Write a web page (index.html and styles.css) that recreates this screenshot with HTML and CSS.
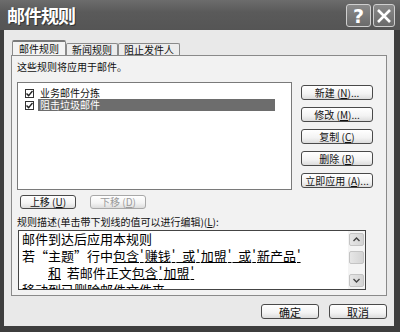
FILE: index.html
```html
<!doctype html>
<html lang="zh-CN">
<head>
  <meta charset="utf-8" />
  <title>邮件规则</title>
  <link rel="stylesheet" href="styles.css">
</head>
<body>
  <div class="window">
    <div class="titlebar">
      <span class="title">邮件规则</span>
      <div class="caps">
        <span class="cap">?</span>
        <span class="cap cap-x">
          <svg width="16" height="16" viewBox="0 0 16 16"><path d="M2 2 L14 14 M14 2 L2 14" stroke="#fff" stroke-width="2.6"/></svg>
        </span>
      </div>
    </div>

    <div class="client">
      <div class="tabs">
        <span class="tab on">邮件规则</span>
        <span class="tab">新闻规则</span>
        <span class="tab">阻止发件人</span>
      </div>

      <div class="panel">
        <div class="hint">这些规则将应用于邮件。</div>

        <div class="rules">
          <div class="list">
            <div class="item"><span class="chk"><svg width="7" height="7" viewBox="0 0 7 7"><path d="M0.5 3.5 L2.6 5.6 L6.5 1" fill="none" stroke="#222" stroke-width="1.4"/></svg></span><span class="name">业务邮件分拣</span></div>
            <div class="item sel"><span class="chk"><svg width="7" height="7" viewBox="0 0 7 7"><path d="M0.5 3.5 L2.6 5.6 L6.5 1" fill="none" stroke="#222" stroke-width="1.4"/></svg></span><span class="name">阻击垃圾邮件</span></div>
          </div>
          <div class="side">
            <button class="btn">新建 (<u>N</u>)...</button>
            <button class="btn">修改 (<u>M</u>)...</button>
            <button class="btn">复制 (<u>C</u>)</button>
            <button class="btn">删除 (<u>R</u>)</button>
            <button class="btn">立即应用 (<u>A</u>)...</button>
          </div>
        </div>

        <div class="moves">
          <button class="btn small">上移 (<u>U</u>)</button>
          <button class="btn small off">下移 (<u>D</u>)</button>
        </div>

        <div class="label">规则描述(单击带下划线的值可以进行编辑)(<u>L</u>):</div>

        <div class="desc">
          <div class="desc-text">
            <div>邮件到达后应用本规则</div>
            <div>若“主题”行中<u>包含<span class="q">'</span>赚钱<span class="q">'</span>&nbsp; 或<span class="q">'</span>加盟<span class="q">'</span>&nbsp; 或<span class="q">'</span>新产品<span class="q">'</span></u></div>
            <div class="indent"><u>和</u>&nbsp; 若邮件正文<u>包含<span class="q">'</span>加盟<span class="q">'</span></u></div>
            <div>移动到已删除邮件文件夹</div>
          </div>
          <div class="scroll">
            <span class="arrow"><svg width="7" height="5" viewBox="0 0 7 5"><path d="M0.5 4 L3.5 1 L6.5 4" fill="none" stroke="#444" stroke-width="1.4"/></svg></span>
            <span class="thumb"></span>
            <span class="track"></span>
            <span class="arrow"><svg width="7" height="5" viewBox="0 0 7 5"><path d="M0.5 1 L3.5 4 L6.5 1" fill="none" stroke="#444" stroke-width="1.4"/></svg></span>
          </div>
        </div>
      </div>

      <div class="footer">
        <button class="btn wide">确定</button>
        <button class="btn wide">取消</button>
      </div>
    </div>
  </div>
</body>
</html>
```

FILE: styles.css
```css
* { box-sizing: border-box; }
html, body {
  margin: 0; width: 400px; height: 332px; overflow: hidden;
  font-family: "Noto Sans CJK SC", "Noto Sans", sans-serif;
  background: #3e3e3e;
}
.window { display: flex; flex-direction: column; height: 332px; }

.titlebar {
  height: 30px; flex: none;
  display: flex; align-items: center; justify-content: space-between;
  padding: 0 5px 0 7px;
  background: linear-gradient(180deg, #6c6c6c 0%, #5a5a5a 40%, #555 100%);
}
.title {
  color: #fff; font-size: 18px; font-weight: bold; letter-spacing: -1px;
  text-shadow: 1px 1px 0 #333;
}
.caps { display: flex; gap: 2px; padding-top: 1px; }
.cap {
  width: 25px; height: 23px;
  display: flex; align-items: center; justify-content: center;
  border: 1px solid #cfcfcf; border-radius: 3px;
  background: linear-gradient(180deg, #8a8a8a, #6a6a6a);
  color: #fff; font-family: "DejaVu Sans", sans-serif; font-weight: bold; font-size: 19px;
}
.cap-x { width: 22px; }

.client {
  flex: 1; display: flex; flex-direction: column;
  margin: 0 6px 6px 4px;
  padding: 10px 7px 0 7px;
  background: #e9e9e9;
  font-size: 10px; color: #111;
}

.tabs { display: flex; align-items: flex-end; padding-left: 1px; height: 15px; }
.tab {
  height: 12px; line-height: 11px;
  padding: 0 5px;
  border: 1px solid #8a8a8a; border-bottom: none; border-radius: 2px 2px 0 0;
  background: #ececec; white-space: nowrap;
}
.tab.on {
  height: 15px; line-height: 14px; padding: 0 6px;
  background: #f3f3f3; border-top: 2px solid #7a7a7a;
}

.panel {
  height: 241px; flex: none;
  border: 1px solid #8a8a8a;
  background: #f2f2f2;
  padding: 5px 6px 0 5px;
  display: flex; flex-direction: column;
}
.hint { line-height: 12px; }

.rules { display: flex; gap: 9px; margin-top: 9px; }
.list {
  width: 275px; height: 108px;
  background: #fff; border: 1px solid #7a7a7a;
  padding: 4px 0 0 7px;
  display: flex; flex-direction: column;
}
.item { display: flex; align-items: center; height: 12px; gap: 4px; }
.chk {
  width: 9px; height: 9px; flex: none;
  border: 1px solid #333; background: #fff;
  display: flex; align-items: center; justify-content: center;
}
.name { line-height: 12px; height: 12px; padding: 0 2px; }
.item.sel .name { background: #6d6d6d; color: #fff; width: 237px; }

.side { display: flex; flex-direction: column; gap: 7px; padding-top: 3px; }
.btn {
  width: 72px; height: 15px; padding: 0;
  font: inherit; font-size: 10px; line-height: 12px; color: #111;
  border: 1px solid #4a4a4a; border-radius: 3px;
  background: linear-gradient(180deg, #fff 0%, #f3f3f3 60%, #dcdcdc 100%);
}
.btn u { text-decoration: underline; }

.moves { display: flex; gap: 14px; margin-top: 5px; padding-left: 3px; }
.btn.small { width: 56px; height: 14px; }
.btn.off { color: #9a9a9a; border-color: #a8a8a8; }

.label { margin-top: 7px; line-height: 12px; }

.desc {
  margin: 2px 0 0 1px;
  width: 348px; height: 60px;
  border: 1px solid #444; background: #fff;
  display: flex; justify-content: space-between;
  overflow: hidden;
}
.desc-text {
  padding: 0 0 0 3px;
  font-size: 13px; line-height: 17px; color: #000;
  white-space: nowrap; margin-top: -1px;
}
.desc-text u { text-decoration-thickness: 1px; text-underline-offset: 1px; }
.q { padding: 0 1px; }
.indent { padding-left: 26px; }

.scroll {
  width: 17px; flex: none;
  display: flex; flex-direction: column; gap: 2px;
  padding: 2px 1px;
  background: #f4f4f4;
}
.arrow, .thumb {
  height: 13px;
  border: 1px solid #c4c4c4; border-radius: 2px;
  background: linear-gradient(90deg, #e6e6e6, #d4d4d4);
  display: flex; align-items: center; justify-content: center;
}
.thumb { margin-top: 3px; height: 13px; }
.track { flex: 1; }

.footer {
  display: flex; justify-content: flex-end; gap: 10px;
  margin-top: 8px; padding-right: 0;
}
.btn.wide { width: 58px; height: 15px; font-size: 11px; }
```
